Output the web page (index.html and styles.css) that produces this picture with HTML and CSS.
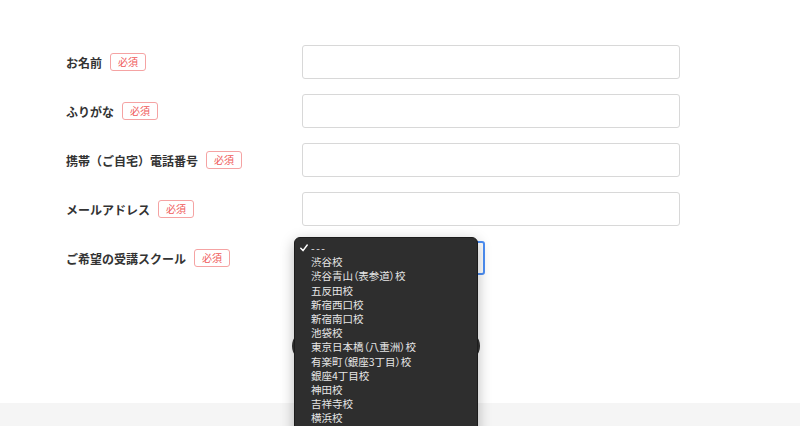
FILE: index.html
```html
<!DOCTYPE html>
<html lang="ja">
<head>
<meta charset="utf-8">
<link rel="stylesheet" href="styles.css">
</head>
<body>
<main class="page">
  <form class="form">
    <div class="row">
      <div class="label"><span>お名前</span><span class="req">必須</span></div>
      <div class="field"></div>
    </div>
    <div class="row">
      <div class="label"><span>ふりがな</span><span class="req">必須</span></div>
      <div class="field"></div>
    </div>
    <div class="row">
      <div class="label"><span>携帯（ご自宅）電話番号</span><span class="req">必須</span></div>
      <div class="field"></div>
    </div>
    <div class="row">
      <div class="label"><span>メールアドレス</span><span class="req">必須</span></div>
      <div class="field"></div>
    </div>
    <div class="row">
      <div class="label"><span>ご希望の受講スクール</span><span class="req">必須</span></div>
      <div class="select"></div>
    </div>
    <div class="submit-row"><div class="submit"></div></div>
  </form>
  <footer class="footer"></footer>
  <ul class="menu">
    <li class="opt checked"><svg class="check" width="8" height="8" viewBox="0 0 8 8"><path d="M0.8 4.3 L3 6.6 L7.2 1" fill="none" stroke="#ffffff" stroke-width="1.5" stroke-linecap="round" stroke-linejoin="round"/></svg><span class="dash">---</span></li>
    <li class="opt">渋谷校</li>
    <li class="opt">渋谷青山（表参道）校</li>
    <li class="opt">五反田校</li>
    <li class="opt">新宿西口校</li>
    <li class="opt">新宿南口校</li>
    <li class="opt">池袋校</li>
    <li class="opt">東京日本橋（八重洲）校</li>
    <li class="opt">有楽町（銀座3丁目）校</li>
    <li class="opt">銀座4丁目校</li>
    <li class="opt">神田校</li>
    <li class="opt">吉祥寺校</li>
    <li class="opt">横浜校</li>
  </ul>
</main>
</body>
</html>
```

FILE: styles.css
```css
html, body {
  margin: 0;
  padding: 0;
  background: #ffffff;
  height: 100%;
  overflow: hidden;
}
body {
  font-family: "Noto Sans CJK JP", "Noto Sans", sans-serif;
  color: #333333;
}
.page {
  position: relative;
  height: 426px;
  display: flex;
  flex-direction: column;
}
.form {
  padding: 45px 0 0 66px;
  display: flex;
  flex-direction: column;
  gap: 15px;
  flex: 1;
}
.row {
  display: flex;
  align-items: center;
  height: 34px;
}
.label {
  width: 236px;
  display: flex;
  align-items: center;
  font-size: 12px;
  font-weight: bold;
  color: #333333;
}
.req {
  margin-left: 8px;
  box-sizing: border-box;
  height: 18px;
  line-height: 16px;
  padding: 0 7px;
  border: 1px solid #f5a3a3;
  border-radius: 3px;
  color: #ef5a5a;
  font-size: 10px;
  font-weight: normal;
}
.field {
  box-sizing: border-box;
  width: 378px;
  height: 34px;
  border: 1px solid #d8d8d8;
  border-radius: 3px;
  background: #ffffff;
}
.select {
  box-sizing: border-box;
  width: 183px;
  height: 34px;
  border: 2px solid #4d8ff5;
  border-radius: 3px;
  background: #ffffff;
}
.submit-row {
  margin-top: 40px;
  padding-left: 226px;
}
.submit {
  width: 188px;
  height: 32px;
  border-radius: 16px;
  background: #333333;
}
.footer {
  height: 23px;
  background: #f5f5f5;
}
.menu {
  position: absolute;
  left: 294px;
  top: 237px;
  width: 184px;
  height: 200px;
  margin: 0;
  padding: 3px 0 0 0;
  list-style: none;
  box-sizing: border-box;
  background: #2e2e2e;
  border: 1px solid #1c1c1c;
  border-radius: 6px;
  box-shadow: 0 4px 14px rgba(0, 0, 0, 0.28);
}
.opt {
  position: relative;
  height: 14.2px;
  line-height: 14.2px;
  padding-left: 16px;
  font-size: 10.5px;
  color: #e6e6e6;
  white-space: nowrap;
  font-feature-settings: "palt";
}
.dash {
  letter-spacing: 1.5px;
}
.check {
  position: absolute;
  left: 5px;
  top: 3px;
}
```
